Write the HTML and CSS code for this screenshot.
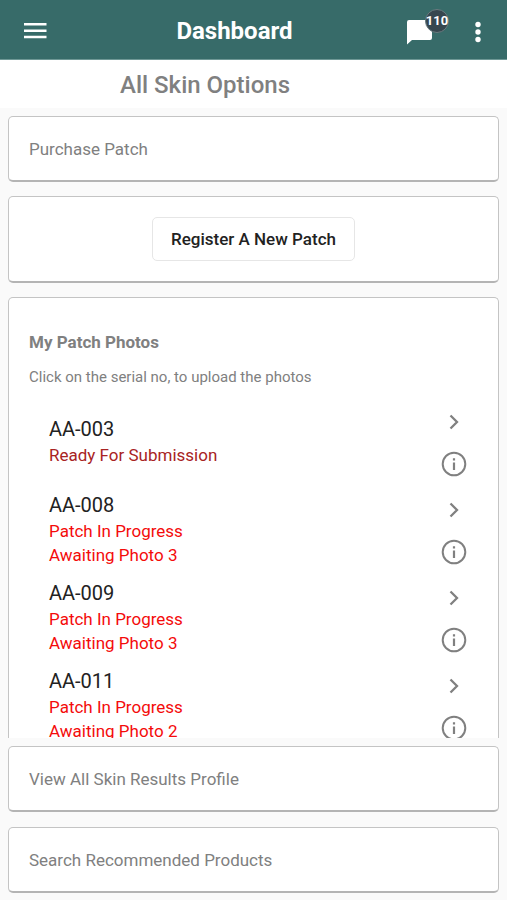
FILE: index.html
```html
<!DOCTYPE html>
<html lang="en">
<head>
<meta charset="utf-8">
<meta name="viewport" content="width=device-width, initial-scale=1">
<title>Dashboard</title>
<link rel="stylesheet" href="styles.css">
</head>
<body>
<svg class="symbols" aria-hidden="true">
  <symbol id="chevron" viewBox="0 0 28 28"><path d="M10.500 7.500 17 14l-6.500 6.500" fill="none" stroke="currentColor" stroke-width="2.300"/></symbol>
  <symbol id="info" viewBox="0 0 28 28"><circle cx="14" cy="14" r="11.300" fill="none" stroke="currentColor" stroke-width="2"/><path d="M12.900 8.200h2.200v2.200h-2.200zM12.900 12.500h2.200v7.500h-2.200z" fill="currentColor"/></symbol>
</svg>
<header class="appbar">
  <button class="icon-button" aria-label="Menu"><svg width="24" height="18" viewBox="0 0 24 18"><path d="M0 2.200h22.500M0 8.800h22.500M0 15h22.500" stroke="currentColor" stroke-width="2.400"/></svg></button>
  <h1 class="appbar-title">Dashboard</h1>
  <div class="actions">
    <button class="icon-button messages" aria-label="Messages, 110 unread">
      <svg width="25" height="25" viewBox="0 0 25 25"><path d="M2 0h21a2 2 0 0 1 2 2v16a2 2 0 0 1-2 2H5l-5 4.500V2a2 2 0 0 1 2-2z" fill="currentColor"/></svg>
      <span class="badge">110</span>
    </button>
    <button class="icon-button" aria-label="More options"><svg width="6" height="22" viewBox="0 0 6 22"><g fill="currentColor"><circle cx="3" cy="3.500" r="2.700"/><circle cx="3" cy="11" r="2.700"/><circle cx="3" cy="18.500" r="2.700"/></g></svg></button>
  </div>
</header>
<h2 class="page-title">All Skin Options</h2>
<main class="content">
  <a class="card link-card" href="#purchase">Purchase Patch</a>
  <section class="card register-card"><button class="register">Register A New Patch</button></section>
  <section class="card photos">
    <h3 class="photos-title">My Patch Photos</h3>
    <p class="hint">Click on the serial no, to upload the photos</p>
    <ul class="patches">
      <li class="patch">
        <div class="patch-text"><a class="serial" href="#aa-003">AA-003</a><p class="status ready">Ready For Submission</p></div>
        <div class="patch-actions"><button class="patch-button" aria-label="Open AA-003"><svg><use href="#chevron"/></svg></button><button class="patch-button" aria-label="About AA-003"><svg><use href="#info"/></svg></button></div>
      </li>
      <li class="patch">
        <div class="patch-text"><a class="serial" href="#aa-008">AA-008</a><p class="status">Patch In Progress</p><p class="status">Awaiting Photo 3</p></div>
        <div class="patch-actions"><button class="patch-button" aria-label="Open AA-008"><svg><use href="#chevron"/></svg></button><button class="patch-button" aria-label="About AA-008"><svg><use href="#info"/></svg></button></div>
      </li>
      <li class="patch">
        <div class="patch-text"><a class="serial" href="#aa-009">AA-009</a><p class="status">Patch In Progress</p><p class="status">Awaiting Photo 3</p></div>
        <div class="patch-actions"><button class="patch-button" aria-label="Open AA-009"><svg><use href="#chevron"/></svg></button><button class="patch-button" aria-label="About AA-009"><svg><use href="#info"/></svg></button></div>
      </li>
      <li class="patch">
        <div class="patch-text"><a class="serial" href="#aa-011">AA-011</a><p class="status">Patch In Progress</p><p class="status">Awaiting Photo 2</p></div>
        <div class="patch-actions"><button class="patch-button" aria-label="Open AA-011"><svg><use href="#chevron"/></svg></button><button class="patch-button" aria-label="About AA-011"><svg><use href="#info"/></svg></button></div>
      </li>
    </ul>
  </section>
</main>
<nav class="footer">
  <a class="card link-card" href="#results">View All Skin Results Profile</a>
  <a class="card link-card" href="#products">Search Recommended Products</a>
</nav>
</body>
</html>
```
FILE: styles.css
```css
* { box-sizing: border-box; }
body {
  margin: 0;
  height: 100vh;
  display: flex;
  flex-direction: column;
  background: #fafafa;
  color: #808080;
  font-family: Roboto, sans-serif;
  font-size: 17px;
  line-height: 24px;
}
h1, h2, h3, p, ul { margin: 0; padding: 0; }
a { color: inherit; text-decoration: none; }
button { font: inherit; color: inherit; background: none; border: 0; padding: 0; }
svg { display: block; }
.symbols { display: none; }

.appbar {
  flex: none;
  display: grid;
  grid-template-columns: 1fr auto 1fr;
  align-items: center;
  height: 60px;
  padding: 3px 26px 0 24px;
  background: #376b69;
  border-bottom: 1px solid #6f9896;
  color: #fff;
}
.appbar > .icon-button { justify-self: start; }
.appbar-title {
  padding-right: 36px;
  font-size: 24px;
  font-weight: 700;
  line-height: 32px;
}
.actions { display: flex; justify-content: flex-end; align-items: center; gap: 43px; padding-top: 2px; }
.messages { position: relative; }
.badge {
  position: absolute;
  top: -11px;
  left: 18px;
  width: 24px;
  height: 24px;
  display: flex;
  align-items: center;
  justify-content: center;
  border: 1px solid #6a7c80;
  border-radius: 50%;
  background: #37474f;
  font-size: 13px;
  font-weight: 700;
}

.page-title {
  flex: none;
  padding: 9px 97px 7px 0;
  background: #fff;
  font-size: 24px;
  font-weight: 500;
  line-height: 32px;
  text-align: center;
}

.content {
  flex: 1;
  min-height: 0;
  overflow: hidden;
  display: flex;
  flex-direction: column;
  gap: 14px;
  padding: 8px 8px 0;
}
.card {
  flex: none;
  border: 1px solid #c4c4c4;
  border-bottom: 2px solid #b4b4b4;
  border-radius: 5px;
  background: #fff;
}
.link-card { display: block; padding: 20px 20px 19px; }
.register-card { display: flex; justify-content: center; padding: 20px; }
.register {
  padding: 9px 18px;
  border: 1px solid #e6e6e6;
  border-radius: 5px;
  color: #222;
  font-weight: 500;
}
.photos { padding: 32px 20px; }
.photos-title { font-size: 17px; font-weight: 700; }
.hint { padding-top: 11px; font-size: 15px; }
.patches { list-style: none; padding: 10px 10px 0 20px; }
.patch { display: flex; justify-content: space-between; align-items: center; height: 88px; }
.patch-text { padding-bottom: 5px; }
.serial { display: block; color: #222; font-size: 20px; line-height: 28px; }
.status { color: #f40b0b; }
.ready { color: #a82323; }
.patch-actions { display: flex; flex-direction: column; gap: 14px; }
.patch-button svg { width: 28px; height: 28px; }

.footer { flex: none; display: flex; flex-direction: column; gap: 15px; padding: 8px 8px 7px; }
```
